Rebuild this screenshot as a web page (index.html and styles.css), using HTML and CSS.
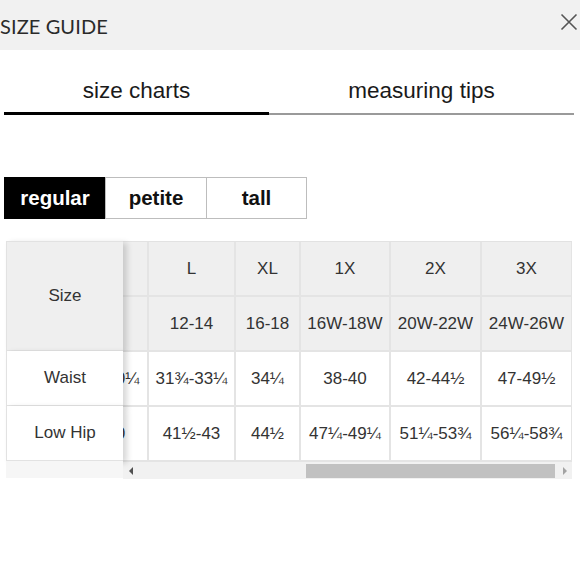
FILE: index.html
```html
<!DOCTYPE html>
<html>
<head>
<meta charset="utf-8">
<link rel="stylesheet" href="styles.css">
</head>
<body>
<div class="header">
  <div class="title">SIZE GUIDE</div>
  <svg class="close" width="18" height="18" viewBox="0 0 18 18"><path d="M1.5 1.5 L16.5 16.5 M16.5 1.5 L1.5 16.5" stroke="#555" stroke-width="1.6" fill="none"/></svg>
</div>
<div class="tabs">
  <div class="tab tab-active">size charts</div>
  <div class="tab tab-other">measuring tips</div>
</div>
<div class="segments">
  <div class="seg seg-on">regular</div>
  <div class="seg">petite</div>
  <div class="seg seg-last">tall</div>
</div>
<div class="chart">
  <div class="fixed">
    <div class="fcell fhead">Size</div>
    <div class="fcell">Waist</div>
    <div class="fcell">Low Hip</div>
    <div class="ffill"></div>
  </div>
  <div class="scroll">
    <div class="grid">
      <div class="cell head partial"></div>
      <div class="cell head">L</div>
      <div class="cell head">XL</div>
      <div class="cell head">1X</div>
      <div class="cell head">2X</div>
      <div class="cell head last">3X</div>
      <div class="cell head partial"></div>
      <div class="cell head">12-14</div>
      <div class="cell head">16-18</div>
      <div class="cell head">16W-18W</div>
      <div class="cell head">20W-22W</div>
      <div class="cell head last">24W-26W</div>
      <div class="cell partial"><span class="ghost">29¾-30¼</span></div>
      <div class="cell">31¾-33¼</div>
      <div class="cell">34¼</div>
      <div class="cell">38-40</div>
      <div class="cell">42-44½</div>
      <div class="cell last">47-49½</div>
      <div class="cell partial"><span class="ghost">38-40</span></div>
      <div class="cell">41½-43</div>
      <div class="cell">44½</div>
      <div class="cell">47¼-49¼</div>
      <div class="cell">51¼-53¾</div>
      <div class="cell last">56¼-58¾</div>
    </div>
    <div class="scrollbar">
      <div class="arrow"><span class="tri-left"></span></div>
      <div class="track"><div class="thumb"></div></div>
      <div class="arrow"><span class="tri-right"></span></div>
    </div>
  </div>
</div>
</body>
</html>
```
FILE: styles.css
```css
* { box-sizing: border-box; }
body {
  margin: 0;
  background: #fff;
  font-family: "Liberation Sans", Arial, sans-serif;
  color: #222;
}
.header {
  height: 50px;
  background: #f1f1f1;
  display: flex;
  align-items: center;
  justify-content: space-between;
}
.title {
  font-family: Lato, "Open Sans", sans-serif;
  font-size: 20px;
  color: #2a2a2a;
  letter-spacing: 0.1px;
  margin-top: 2px;
}
.close {
  margin-right: 2px;
  margin-top: -6px;
}
.tabs {
  display: flex;
  align-items: flex-end;
  margin-left: 4px;
  height: 65px;
}
.tab {
  font-size: 22.5px;
  text-align: center;
  line-height: 26px;
  padding-bottom: 8px;
  color: #1a1a1a;
}
.tab-active {
  width: 265px;
  border-bottom: 3px solid #000;
}
.tab-other {
  width: 305px;
  border-bottom: 2px solid #9a9a9a;
  padding-bottom: 9px;
}
.segments {
  display: flex;
  margin: 62px 0 0 4px;
}
.seg {
  width: 101px;
  height: 42px;
  border: 1px solid #bdbdbd;
  border-right: 0;
  display: flex;
  align-items: center;
  justify-content: center;
  font-weight: bold;
  font-size: 20.5px;
  color: #111;
}
.seg-last {
  width: 101px;
  border-right: 1px solid #bdbdbd;
}
.seg-on {
  background: #000;
  color: #fff;
  border-color: #000;
}
.chart {
  display: flex;
  margin: 22px 0 0 6px;
  width: 566px;
}
.fixed {
  width: 117px;
  flex-shrink: 0;
  display: flex;
  flex-direction: column;
  position: relative;
  z-index: 1;
}
.fcell {
  height: 55px;
  display: flex;
  align-items: center;
  justify-content: center;
  font-size: 17px;
  color: #333;
  background: #fff;
  border-left: 1px solid #e2e2e2;
  border-bottom: 1px solid #e2e2e2;
  box-shadow: 4px 2px 6px rgba(0,0,0,0.16);
}
.fhead {
  height: 110px;
  background: #efefef;
  border-top: 1px solid #e2e2e2;
}
.ffill {
  height: 17px;
  background: #f6f6f6;
}
.scroll {
  width: 449px;
  display: flex;
  flex-direction: column;
}
.grid {
  display: grid;
  grid-template-columns: 26px 87px 65px 90px 91px 90px;
  grid-auto-rows: 55px;
  border-top: 1px solid #e2e2e2;
}
.cell {
  display: flex;
  align-items: center;
  justify-content: center;
  font-size: 17px;
  color: #333;
  white-space: nowrap;
  border-right: 2px solid #e4e4e4;
  border-bottom: 2px solid #e4e4e4;
}
.cell.last {
  border-right: 1px solid #e4e4e4;
}
.head {
  background: #efefef;
}
.partial {
  justify-content: flex-end;
  overflow: hidden;
}
.ghost {
  width: 87px;
  flex-shrink: 0;
  text-align: center;
}
.scrollbar {
  height: 17px;
  display: flex;
  background: #f1f1f1;
}
.arrow {
  width: 15px;
  display: flex;
  align-items: center;
  justify-content: center;
}
.tri-left {
  width: 0; height: 0;
  border-top: 4px solid transparent;
  border-bottom: 4px solid transparent;
  border-right: 4px solid #505050;
}
.tri-right {
  width: 0; height: 0;
  border-top: 4px solid transparent;
  border-bottom: 4px solid transparent;
  border-left: 4px solid #a3a3a3;
}
.track {
  flex: 1;
  display: flex;
  align-items: center;
}
.thumb {
  margin-left: 168px;
  width: 249px;
  height: 14px;
  background: #c1c1c1;
}
```
